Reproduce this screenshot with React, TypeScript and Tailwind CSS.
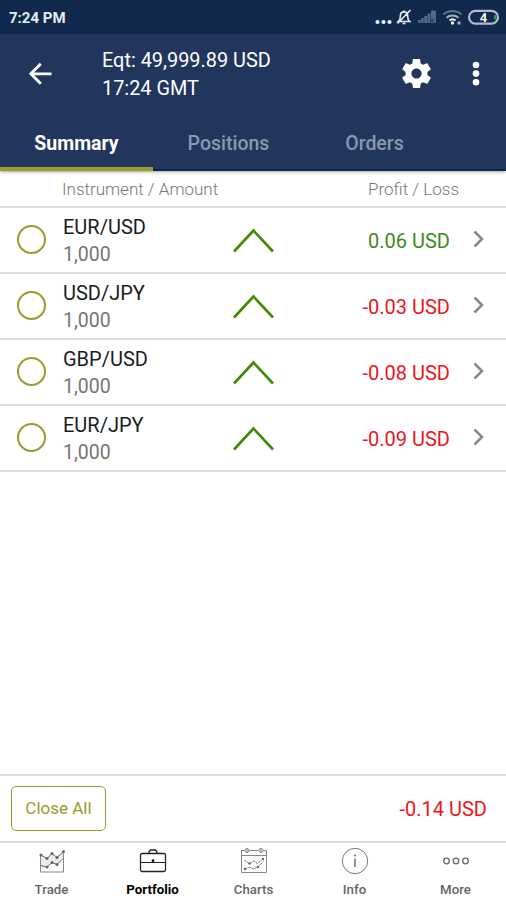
import type { ReactNode } from "react";

const GREEN = "#3f8a00";
const GRAY = "#666666";

interface Position {
  pair: string;
  amount: string;
  pl: string;
  gain: boolean;
}

const POSITIONS: Position[] = [
  { pair: "EUR/USD", amount: "1,000", pl: "0.06 USD", gain: true },
  { pair: "USD/JPY", amount: "1,000", pl: "-0.03 USD", gain: false },
  { pair: "GBP/USD", amount: "1,000", pl: "-0.08 USD", gain: false },
  { pair: "EUR/JPY", amount: "1,000", pl: "-0.09 USD", gain: false },
];

function StatusBar() {
  return (
    <div className="flex h-[34px] shrink-0 items-center justify-between bg-[#10294d] pt-px pl-[9px] pr-[6px] text-[#e6ebf3]">
      <span className="pt-[2px] text-[15px] font-bold leading-none">7:24 PM</span>
      <svg width="126" height="24" viewBox="374 6 126 24" fill="none">
        <g fill="#f2f4f8">
          <circle cx="377.5" cy="22" r="2.1" />
          <circle cx="383.5" cy="22" r="2.1" />
          <circle cx="389.5" cy="22" r="2.1" />
        </g>
        <path d="M398.5 21.5h11c-1.8-1.3-1.8-2.8-1.8-5 0-3-1.4-4.6-3.7-4.6s-3.7 1.6-3.7 4.6c0 2.2 0 3.7-1.8 5zM402.5 23.5h3M404 10.5v1M397.5 23.5l13-13.5" stroke="#e6ebf3" strokeWidth="1.6" />
        <g fill="#536b89">
          <path d="M418 20h2.6v3H418zM421.1 18h2.6v5h-2.600zM424.3 16h2.8v7h-2.800zM427.600 13.5h2.8V23h-2.800zM431 10.5h4l1 1V23h-5z" />
        </g>
        <path d="M430 18.5l4 4M434 18.5l-4 4" stroke="#10294d" strokeWidth="1" />
        <path d="M443.5 14.5c5-4.6 13-4.6 18 0" stroke="#61758f" strokeWidth="1.9" />
        <path d="M446.5 17.8c3.4-3 8.6-3 12 0" stroke="#a5b1c2" strokeWidth="1.9" />
        <path d="M449.5 20.6c1.8-1.5 4.2-1.5 6 0" stroke="#f2f4f8" strokeWidth="1.9" />
        <circle cx="452.5" cy="23" r="1.7" fill="#f2f4f8" />
        <path d="M457.5 21.5h3v3h-3z" fill="#a5b1c2" />
        <rect x="469" y="10.8" width="29" height="12.8" rx="6.4" stroke="#b5bac8" strokeWidth="2.2" />
        <path d="M494.2 15h1.4c1 1.3 1 3.2 0 4.5h-1.4z" fill="#37a63c" />
        <text x="483.5" y="22" textAnchor="middle" fontSize="13" fontWeight="700" fill="#f2f4f8">4</text>
      </svg>
    </div>
  );
}

function Header() {
  return (
    <div className="flex h-[82px] shrink-0 items-start text-white">
      <svg className="ml-[27px] mt-[28px]" width="26" height="24" viewBox="0 0 26 24" fill="none" stroke="#ffffff" strokeWidth="2.8">
        <path d="M24.5 11.8H4M13.8 1.8l-10 10 10 10" />
      </svg>
      <div className="ml-[49px] mt-[13px] text-[19.9px] leading-[28px]">
        <div>Eqt: 49,999.89 USD</div>
        <div>17:24 GMT</div>
      </div>
      <svg className="ml-auto mt-[22px]" width="35" height="35" viewBox="0 0 24 24" fill="#ffffff">
        <path d="M19.43 12.98c.04-.32.07-.64.07-.98s-.03-.66-.07-.98l2.11-1.65c.19-.15.24-.42.12-.64l-2-3.46c-.12-.22-.39-.3-.61-.22l-2.49 1c-.52-.4-1.08-.73-1.69-.98l-.38-2.65C14.46 2.18 14.25 2 14 2h-4c-.25 0-.46.18-.49.42l-.38 2.65c-.61.25-1.17.59-1.69.98l-2.49-1c-.23-.09-.49 0-.61.22l-2 3.46c-.13.22-.07.49.12.64l2.11 1.65c-.04.32-.07.65-.07.98s.03.66.07.98l-2.11 1.65c-.19.15-.24.42-.12.64l2 3.46c.12.22.39.3.61.22l2.49-1c.52.4 1.08.73 1.69.98l.38 2.65c.03.24.24.42.49.42h4c.25 0 .46-.18.49-.42l.38-2.65c.61-.25 1.17-.59 1.69-.98l2.49 1c.23.09.49 0 .61-.22l2-3.46c.12-.22.07-.49-.12-.64l-2.11-1.65zM12 15.5c-1.93 0-3.5-1.57-3.5-3.5s1.57-3.5 3.5-3.5 3.5 1.57 3.5 3.5-1.57 3.5-3.5 3.5z" />
      </svg>
      <svg className="ml-[37px] mr-[25px] mt-[27px]" width="10" height="26" viewBox="0 0 10 26" fill="#ffffff">
        <circle cx="5" cy="4" r="3.3" />
        <circle cx="5" cy="12.6" r="3.3" />
        <circle cx="5" cy="21.2" r="3.3" />
      </svg>
    </div>
  );
}

function Tabs() {
  return (
    <div className="z-10 flex h-[55px] shrink-0 border-b-2 border-[#0e2850] text-[19.5px] font-medium text-[#8a97b2] shadow-[0_1px_3px_rgba(60,40,40,0.45)]">
      <div className="-mb-[2px] flex w-[153px] items-center justify-center border-b-4 border-[#93a02f] pt-[4px] font-bold text-white">Summary</div>
      <div className="flex w-[151px] items-center justify-center pt-[3px]">Positions</div>
      <div className="flex w-[141px] items-center justify-center pt-[3px]">Orders</div>
    </div>
  );
}

function PositionRow({ pair, amount, pl, gain }: Position) {
  return (
    <div className="flex h-[66px] items-center border-b-2 border-[#dcdcdc]">
      <div className="mb-[2px] ml-[17px] size-[29px] rounded-full border-[2.5px] border-[#8ba32a]" />
      <div className="ml-[17px] w-[160px] pt-[2px] text-[20px] leading-[28px]">
        <div className="text-[#1c1c1c]">{pair}</div>
        <div className="text-[19.5px] text-[#757575]">{amount}</div>
      </div>
      <svg className="mb-px ml-[8px]" width="44" height="28" viewBox="0 0 44 28" fill="none" stroke={GREEN} strokeWidth="2.6">
        <path d="M3 25.500L22.500 4.500l19.500 21" />
      </svg>
      <div className={gain ? "ml-auto pt-[2px] text-[20px] text-[#3f8a1a]" : "ml-auto pt-[2px] text-[20px] text-[#ee1420]"}>{pl}</div>
      <svg className="mb-[2px] ml-[22px] mr-[20px]" width="14" height="20" viewBox="0 0 14 20" fill="none" stroke="#8a8a8a" strokeWidth="2.6">
        <path d="M2.5 2.5l7.5 7.5-7.5 7.5" />
      </svg>
    </div>
  );
}

function NavItem({ label, active, children }: { label: string; active?: boolean; children: ReactNode }) {
  return (
    <div className="flex flex-1 flex-col items-center">
      <svg className="mt-[4px]" width="32" height="30" viewBox="0 0 32 30" fill="none" stroke={active ? "#222222" : GRAY} strokeWidth="1">
        {children}
      </svg>
      <span className={active ? "mt-[4px] text-[13.3px] font-bold leading-[17px] text-black" : "mt-[4px] text-[13.3px] font-medium leading-[17px] text-[#666666]"}>{label}</span>
    </div>
  );
}

function BottomNav() {
  return (
    <div className="flex h-[59px] shrink-0 border-t-2 border-[#dcdcdc] pl-px">
      <NavItem label="Trade">
        <path d="M4.500 8.500v16.500h23V5" stroke="#888888" />
        <path d="M5 8v13l6-1 5-5 5 2.500 6-6.500V4l-6 6-5-4-5 5z" fill="#ececec" stroke="none" />
        <path d="M5 8l6 3.500 5-5 5 4 6.500-6M5 18.500l6 1.500 5-4.500 5 2 6-6" />
        <g fill={GRAY} stroke="none">
          <circle cx="5" cy="8" r="1.500" />
          <circle cx="11" cy="11.500" r="1.500" />
          <circle cx="16" cy="6.500" r="1.500" />
          <circle cx="21" cy="10.500" r="1.500" />
          <circle cx="27.500" cy="4.500" r="1.500" />
          <circle cx="11" cy="20" r="1.500" />
          <circle cx="16" cy="15.500" r="1.500" />
          <circle cx="21" cy="17.500" r="1.500" />
        </g>
      </NavItem>
      <NavItem label="Portfolio" active>
        <rect x="3.500" y="6.500" width="25" height="18" rx="1.5" strokeWidth="1.3" />
        <path d="M12 6.500V5l1.500-2h5L20 5v1.500" strokeWidth="1.3" />
        <path d="M4 15.500h24" />
        <circle cx="16" cy="13.700" r="1.4" fill="#000000" stroke="none" />
      </NavItem>
      <NavItem label="Charts">
        <path d="M7 3.500H3.500v22h25v-22H25M11 3.500h10M4 8.500h24" stroke="#888888" />
        <circle cx="9" cy="3.500" r="2" stroke="#888888" />
        <circle cx="23" cy="3.500" r="2" stroke="#888888" />
        <path d="M9 1v5M23 1v5" stroke="#888888" />
        <path d="M6.500 13l5 4 4-3 4 2.500 6-5M7 22l4.500-2 4 2 5-2.500 5-5" strokeDasharray="2.500 1" />
        <g fill={GRAY} stroke="none">
          <circle cx="7" cy="22" r="1.2" />
          <circle cx="11.500" cy="16.500" r="1.2" />
          <circle cx="20" cy="20" r="1.2" />
          <circle cx="25" cy="12" r="1.2" />
        </g>
      </NavItem>
      <NavItem label="Info">
        <circle cx="16" cy="14" r="12.700" stroke="#777777" />
        <path d="M16 11.500v8.500" strokeWidth="1.4" />
        <circle cx="16" cy="8.500" r="1" fill={GRAY} stroke="none" />
      </NavItem>
      <NavItem label="More">
        <circle cx="6.500" cy="14" r="2.800" strokeWidth="1.3" />
        <circle cx="16" cy="14" r="2.800" strokeWidth="1.3" />
        <circle cx="25.500" cy="14" r="2.800" strokeWidth="1.3" />
      </NavItem>
    </div>
  );
}

export default function App() {
  return (
    <div className="flex h-[900px] w-[506px] flex-col overflow-hidden bg-white font-['Roboto',sans-serif]">
      <StatusBar />
      <div className="z-10 flex flex-col bg-[#22365d]">
        <Header />
        <Tabs />
      </div>
      <div className="flex h-[37px] shrink-0 items-center justify-between border-b-2 border-[#dcdcdc] pl-[62px] pr-[47px] pt-[3px] text-[17px] font-light text-[#777777]">
        <span>Instrument / Amount</span>
        <span>Profit / Loss</span>
      </div>
      <div className="flex-1">
        {POSITIONS.map((p) => (
          <PositionRow key={p.pair} {...p} />
        ))}
      </div>
      <div className="flex h-[67px] shrink-0 items-center justify-between border-t-2 border-[#dcdcdc] pl-[11px] pr-[19px]">
        <button className="h-[45px] w-[95px] rounded-[5px] border-[1.5px] border-[#8ba32a] text-[17px] text-[#8ba32a]">Close All</button>
        <span className="text-[20px] text-[#ee1420]">-0.14 USD</span>
      </div>
      <BottomNav />
    </div>
  );
}
